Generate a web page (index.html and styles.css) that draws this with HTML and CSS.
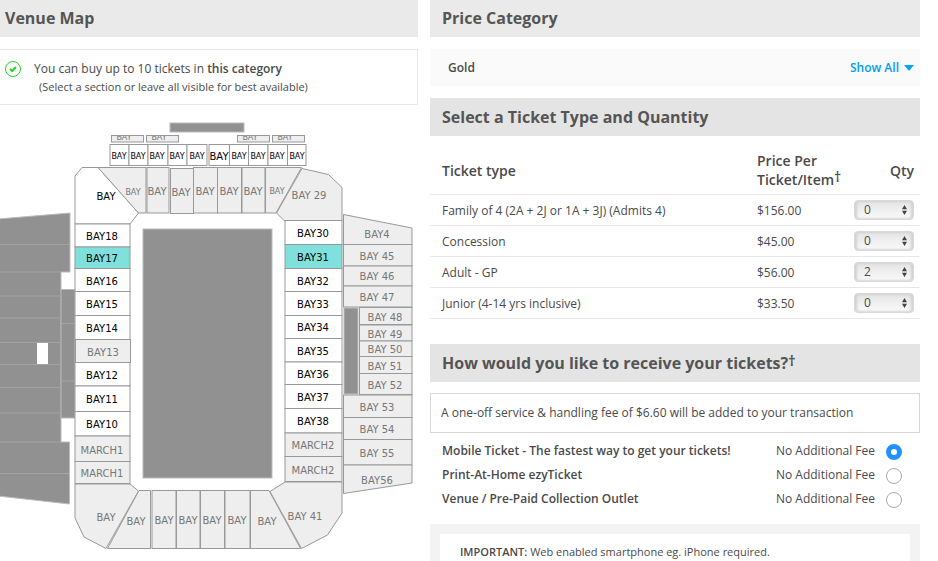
FILE: index.html
```html
<!DOCTYPE html>
<html lang="en">
<head>
    <meta charset="UTF-8">
    <meta name="viewport" content="width=device-width, initial-scale=1.0">
    <title>Select Tickets</title>
    <link rel="stylesheet" href="styles.css">
</head>
<body>
    <main class="page">
        <!-- Venue map -->
        <section class="venue">
            <h2 class="bar bar-venue">Venue Map</h2>

            <div class="notice">
                <svg class="tick" viewBox="0 0 18 18" aria-hidden="true">
                    <circle cx="9" cy="9" r="7.5"/>
                    <path d="M6 9l2 2 4-4"/>
                </svg>
                <div>
                    <p class="notice-main">You can buy up to 10 tickets in <strong>this category</strong></p>
                    <p class="notice-sub">(Select a section or leave all visible for best available)</p>
                </div>
            </div>

            <svg class="map" viewBox="0 105 418 456" role="img" aria-label="Stadium seating map">
                <defs>
                    <clipPath id="strip"><rect x="111" y="136" width="195" height="6"/></clipPath>
                </defs>

                <!-- Stands and field -->
                <g class="stand">
                    <rect x="170" y="123" width="74" height="9"/>
                    <rect x="143" y="229" width="129" height="249"/>
                    <path d="M-2 219L70 213V272H61V442H69.500V504L-2 496Z"/>
                    <rect x="61" y="289.500" width="14" height="128.500"/>
                    <rect x="344" y="308" width="14" height="86"/>
                </g>
                <path class="rows" d="M0 244.500H70M0 272H61M0 296H61M0 318H61M0 342.500H61M0 364.500H61M0 387.500H61M0 413H61M0 442H61M0 473.500H69M61 290V418M62 323.500H75M62 381H75"/>
                <rect class="gap" x="37" y="343" width="11" height="21"/>

                <!-- Open bays -->
                <g class="open">
                    <rect x="110" y="144.500" width="19" height="21"/>
                    <rect x="129" y="144.500" width="19" height="21"/>
                    <rect x="148" y="144.500" width="20" height="21"/>
                    <rect x="168" y="144.500" width="19" height="21"/>
                    <rect x="187" y="144.500" width="20" height="21"/>
                    <rect x="209" y="144.500" width="20.500" height="21"/>
                    <rect x="229.500" y="144.500" width="19" height="21"/>
                    <rect x="248.500" y="144.500" width="19.500" height="21"/>
                    <rect x="268" y="144.500" width="19.500" height="21"/>
                    <rect x="287.500" y="144.500" width="18.500" height="21"/>
                    <path d="M75 176L82 167.500H98L138.500 213L130 224H75Z"/>
                    <rect x="75" y="224" width="55" height="23"/>
                    <rect class="picked" x="75" y="247" width="55" height="21.500"/>
                    <rect x="75" y="268.500" width="55" height="23"/>
                    <rect x="75" y="291.500" width="55" height="24"/>
                    <rect x="75" y="315.500" width="55" height="24"/>
                    <rect x="75" y="362.500" width="55" height="23.500"/>
                    <rect x="75" y="386" width="55" height="25.500"/>
                    <rect x="75" y="411.500" width="55" height="24.500"/>
                    <rect x="285" y="220.500" width="57" height="24"/>
                    <rect class="picked" x="285" y="244.500" width="57" height="24"/>
                    <rect x="285" y="268.500" width="57" height="23"/>
                    <rect x="285" y="291.500" width="57" height="24"/>
                    <rect x="285" y="315.500" width="57" height="23"/>
                    <rect x="285" y="338.500" width="57" height="23.500"/>
                    <rect x="285" y="362" width="57" height="22.500"/>
                    <rect x="285" y="384.500" width="57" height="24"/>
                    <rect x="285" y="408.500" width="57" height="24.500"/>
                </g>

                <!-- Unavailable bays -->
                <g class="closed">
                    <rect x="111.500" y="135.500" width="32" height="6.500"/>
                    <rect x="146.500" y="135.500" width="32" height="6.500"/>
                    <rect x="237.500" y="135.500" width="32" height="6.500"/>
                    <rect x="272.500" y="135.500" width="32" height="6.500"/>
                    <path d="M98 167.500H146V213H138.500Z"/>
                    <rect x="147" y="167.500" width="22" height="45.500"/>
                    <rect x="170.500" y="168.500" width="23" height="45"/>
                    <rect x="193.500" y="167.500" width="24" height="45.500"/>
                    <rect x="217.500" y="167.500" width="24" height="45.500"/>
                    <rect x="242" y="167.500" width="23" height="45.500"/>
                    <path d="M265.500 167.500H301.500L276 213H265.500Z"/>
                    <path d="M302 168.500L328.500 174.500L342 187.500V220.500H284L276.500 213Z"/>
                    <rect x="75.500" y="339.500" width="55" height="23"/>
                    <rect x="75" y="436" width="55" height="25.500"/>
                    <rect x="75" y="461.500" width="55" height="22"/>
                    <path d="M75 484H130L138.500 491L106 548.500L84 537L75 518Z"/>
                    <path d="M139 490.500H150.500V548.500H107.500Z"/>
                    <rect x="152" y="490.500" width="24" height="58"/>
                    <rect x="176.500" y="490.500" width="23.500" height="58"/>
                    <rect x="200.500" y="490.500" width="24" height="58"/>
                    <rect x="225" y="490.500" width="25" height="58"/>
                    <path d="M250.500 490.500H269L300.500 548.500H250.500Z"/>
                    <path d="M270 491.500L285 482H342V513L327.500 535L301.500 548.500Z"/>
                    <rect x="285" y="433" width="57" height="23.500"/>
                    <rect x="285" y="456.500" width="57" height="25"/>
                    <path d="M343.500 214.500L412 228V244.500H343.500Z"/>
                    <rect x="343.500" y="244.500" width="68.500" height="21.500"/>
                    <rect x="343.500" y="266" width="68.500" height="20"/>
                    <rect x="343.500" y="286" width="68.500" height="21"/>
                    <rect x="359.500" y="307.500" width="52.500" height="17"/>
                    <rect x="359.500" y="325" width="52.500" height="16"/>
                    <rect x="359.500" y="341" width="52.500" height="15.500"/>
                    <rect x="359.500" y="356.500" width="52.500" height="17"/>
                    <rect x="359.500" y="373.500" width="52.500" height="21"/>
                    <rect x="343.500" y="395" width="68.500" height="22.500"/>
                    <rect x="343.500" y="417.500" width="68.500" height="22"/>
                    <rect x="343.500" y="439.500" width="68.500" height="25.500"/>
                    <path d="M343.500 465H412V483L343.500 493.500Z"/>
                </g>

                <!-- Labels -->
                <g class="label label-closed label-small" clip-path="url(#strip)">
                    <text x="124" y="140">BAY</text>
                    <text x="159" y="140">BAY</text>
                    <text x="250" y="140">BAY</text>
                    <text x="285" y="140">BAY</text>
                </g>
                <g class="label label-small">
                    <text x="119" y="159">BAY</text>
                    <text x="138" y="159">BAY</text>
                    <text x="157" y="159">BAY</text>
                    <text x="177" y="159">BAY</text>
                    <text x="197" y="159">BAY</text>
                    <text x="239" y="159">BAY</text>
                    <text x="258" y="159">BAY</text>
                    <text x="277" y="159">BAY</text>
                    <text x="297" y="159">BAY</text>
                </g>
                <g class="label">
                    <text x="219" y="160">BAY</text>
                    <text x="106" y="200">BAY</text>
                    <text x="102" y="240">BAY18</text>
                    <text x="102" y="262">BAY17</text>
                    <text x="102" y="285">BAY16</text>
                    <text x="102" y="308">BAY15</text>
                    <text x="102" y="332">BAY14</text>
                    <text x="102" y="379">BAY12</text>
                    <text x="102" y="403">BAY11</text>
                    <text x="102" y="428">BAY10</text>
                    <text x="313" y="237">BAY30</text>
                    <text x="313" y="261">BAY31</text>
                    <text x="313" y="285">BAY32</text>
                    <text x="313" y="308">BAY33</text>
                    <text x="313" y="331">BAY34</text>
                    <text x="313" y="355">BAY35</text>
                    <text x="313" y="378">BAY36</text>
                    <text x="313" y="401">BAY37</text>
                    <text x="313" y="425">BAY38</text>
                </g>
                <g class="label label-closed label-small">
                    <text x="133" y="195">BAY</text>
                    <text x="277" y="194">BAY</text>
                </g>
                <g class="label label-closed">
                    <text x="157" y="195">BAY</text>
                    <text x="181" y="196">BAY</text>
                    <text x="205" y="195">BAY</text>
                    <text x="229" y="195">BAY</text>
                    <text x="253" y="195">BAY</text>
                    <text x="309" y="199">BAY 29</text>
                    <text x="103" y="356">BAY13</text>
                    <text x="102" y="454">MARCH1</text>
                    <text x="102" y="477">MARCH1</text>
                    <text x="106" y="521">BAY</text>
                    <text x="136" y="525">BAY</text>
                    <text x="164" y="524">BAY</text>
                    <text x="188" y="524">BAY</text>
                    <text x="212" y="524">BAY</text>
                    <text x="237" y="524">BAY</text>
                    <text x="267" y="525">BAY</text>
                    <text x="305" y="520">BAY 41</text>
                    <text x="313" y="449">MARCH2</text>
                    <text x="313" y="474">MARCH2</text>
                    <text x="377" y="238">BAY4</text>
                    <text x="377" y="260">BAY 45</text>
                    <text x="377" y="280">BAY 46</text>
                    <text x="377" y="301">BAY 47</text>
                    <text x="385" y="321">BAY 48</text>
                    <text x="385" y="338">BAY 49</text>
                    <text x="385" y="353">BAY 50</text>
                    <text x="385" y="370">BAY 51</text>
                    <text x="385" y="389">BAY 52</text>
                    <text x="377" y="411">BAY 53</text>
                    <text x="377" y="433">BAY 54</text>
                    <text x="377" y="457">BAY 55</text>
                    <text x="377" y="484">BAY56</text>
                </g>
            </svg>
        </section>

        <!-- Ticket options -->
        <section class="options">
            <h2 class="bar">Price Category</h2>

            <div class="category">
                <span>Gold</span>
                <a class="show-all" href="#">Show All
                    <svg class="caret" viewBox="0 0 10 6" aria-hidden="true"><path d="M0 0h10L5 6z"/></svg>
                </a>
            </div>

            <h2 class="bar bar-dark">Select a Ticket Type and Quantity</h2>

            <table class="tickets">
                <thead>
                    <tr>
                        <th class="col-type">Ticket type</th>
                        <th class="col-price">Price Per Ticket/Item<sup>†</sup></th>
                        <th class="col-qty">Qty</th>
                    </tr>
                </thead>
                <tbody>
                    <tr>
                        <td><label for="qty-family">Family of 4 (2A + 2J or 1A + 3J) (Admits 4)</label></td>
                        <td>$156.00</td>
                        <td class="col-qty">
                            <span class="qty">
                                <select id="qty-family"><option>0</option><option>1</option><option>2</option></select>
                                <svg viewBox="0 0 6 12" aria-hidden="true"><path d="M0 5h6L3 0zM0 7h6L3 12z"/></svg>
                            </span>
                        </td>
                    </tr>
                    <tr>
                        <td><label for="qty-concession">Concession</label></td>
                        <td>$45.00</td>
                        <td class="col-qty">
                            <span class="qty">
                                <select id="qty-concession"><option>0</option><option>1</option><option>2</option></select>
                                <svg viewBox="0 0 6 12" aria-hidden="true"><path d="M0 5h6L3 0zM0 7h6L3 12z"/></svg>
                            </span>
                        </td>
                    </tr>
                    <tr>
                        <td><label for="qty-adult">Adult - GP</label></td>
                        <td>$56.00</td>
                        <td class="col-qty">
                            <span class="qty">
                                <select id="qty-adult"><option>0</option><option>1</option><option selected>2</option></select>
                                <svg viewBox="0 0 6 12" aria-hidden="true"><path d="M0 5h6L3 0zM0 7h6L3 12z"/></svg>
                            </span>
                        </td>
                    </tr>
                    <tr>
                        <td><label for="qty-junior">Junior (4-14 yrs inclusive)</label></td>
                        <td>$33.50</td>
                        <td class="col-qty">
                            <span class="qty">
                                <select id="qty-junior"><option>0</option><option>1</option><option>2</option></select>
                                <svg viewBox="0 0 6 12" aria-hidden="true"><path d="M0 5h6L3 0zM0 7h6L3 12z"/></svg>
                            </span>
                        </td>
                    </tr>
                </tbody>
            </table>

            <h2 class="bar bar-dark">How would you like to receive your tickets?<sup>†</sup></h2>

            <p class="fee-note">A one-off service &amp; handling fee of $6.60 will be added to your transaction</p>

            <div class="delivery">
                <label class="method">
                    <strong>Mobile Ticket - The fastest way to get your tickets!</strong>
                    <span>No Additional Fee</span>
                    <input type="radio" name="delivery" checked>
                </label>
                <label class="method">
                    <strong>Print-At-Home ezyTicket</strong>
                    <span>No Additional Fee</span>
                    <input type="radio" name="delivery">
                </label>
                <label class="method">
                    <strong>Venue / Pre-Paid Collection Outlet</strong>
                    <span>No Additional Fee</span>
                    <input type="radio" name="delivery">
                </label>
            </div>

            <div class="important">
                <p><strong>IMPORTANT:</strong> Web enabled smartphone eg. iPhone required.</p>
            </div>
        </section>
    </main>
</body>
</html>
```
FILE: styles.css
```css
/* General settings */
* {
    box-sizing: border-box;
}

body {
    margin: 0;
    background-color: #fff;
    color: #4a4a4a;
    font-family: "Open Sans", Arial, sans-serif;
    font-size: 12px;
    line-height: 18px;
    overflow-x: hidden;
}

p {
    margin: 0;
}

strong {
    font-weight: 600;
}

sup {
    font-size: 14px;
    line-height: 0;
    vertical-align: 3px;
}

.page {
    display: grid;
    grid-template-columns: 418fr 490fr;
    column-gap: 12px;
    padding-right: 18px;
}

/* Grey heading bars */
.bar {
    margin: 0;
    padding: 6px 12px 7px;
    background-color: #eaeaea;
    color: #555;
    font-size: 16px;
    font-weight: 700;
    line-height: 24px;
}

.bar-venue {
    padding-left: 5px;
}

.bar-dark {
    padding-top: 7px;
    background-color: #e4e4e4;
}

/* Ticket limit notice */
.notice {
    display: flex;
    gap: 12px;
    margin-top: 12px;
    padding: 10px 4px 9px;
    border: 1px solid #e8e8e8;
    border-left: 0;
}

.tick {
    flex: none;
    width: 18px;
    height: 18px;
    fill: none;
    stroke: #22d622;
}

.tick path {
    stroke-width: 2;
}

.notice-sub {
    padding-left: 5px;
    font-size: 11px;
    line-height: 17px;
}

/* Seating map */
.map {
    display: block;
    width: 100%;
}

.stand {
    fill: #919191;
    stroke: #bbb;
}

.rows {
    fill: none;
    stroke: #a3a3a3;
}

.gap {
    fill: #fff;
}

.open {
    fill: #fff;
    stroke: #999;
}

.open .picked {
    fill: #80e0dc;
}

.closed {
    fill: #eee;
    stroke: #999;
}

.label {
    fill: #000;
    font-family: "DejaVu Sans", Verdana, sans-serif;
    font-size: 10px;
    text-anchor: middle;
}

.label-small {
    font-size: 8px;
}

.label-closed {
    fill: #777;
}

/* Price category */
.category {
    display: flex;
    justify-content: space-between;
    margin: 12px 0;
    padding: 10px 6px 9px 18px;
    background-color: #fafafa;
    font-weight: 600;
}

.show-all {
    display: flex;
    align-items: center;
    gap: 5px;
    color: #009fec;
    text-decoration: none;
}

.caret {
    width: 10px;
    height: 6px;
    fill: #00a8f3;
}

/* Ticket table */
.tickets {
    width: 100%;
    margin-bottom: 25px;
    border-collapse: collapse;
    table-layout: fixed;
}

.tickets th,
.tickets td {
    height: 31px;
    padding: 2px 0 0 12px;
    border-bottom: 1px solid #e8e8e8;
    text-align: left;
}

.tickets th {
    height: 58px;
    padding-top: 11px;
    font-size: 14px;
    font-weight: 600;
    line-height: 19px;
}

.tickets .col-type {
    width: 315px;
}

.tickets .col-price {
    width: 98px;
}

.tickets .col-qty {
    padding-left: 0;
    padding-right: 6px;
    text-align: right;
}

.tickets td.col-qty {
    padding-top: 0;
}

.qty {
    display: inline-block;
    position: relative;
    vertical-align: middle;
}

.qty select {
    display: block;
    width: 60px;
    height: 20px;
    padding: 0 9px;
    appearance: none;
    border: 1px solid #d8d8d8;
    border-radius: 4px;
    background: linear-gradient(#e4e4e4, #fafafa);
    box-shadow: inset 2px 0 3px #d0d0d0, inset -2px 0 3px #d0d0d0;
    color: #4a4a4a;
    font-family: inherit;
    font-size: 12px;
}

.qty svg {
    position: absolute;
    top: 5px;
    right: 7px;
    width: 5px;
    height: 10px;
    fill: #444;
    pointer-events: none;
}

/* Delivery methods */
.fee-note {
    margin-top: 11px;
    padding: 10px;
    border: 1px solid #d8d8d8;
}

.delivery {
    padding: 6px 18px 13px 12px;
}

.method {
    display: flex;
    align-items: center;
    height: 24px;
}

.method strong {
    flex: 1;
}

.method input {
    width: 16px;
    height: 16px;
    margin: 3px 0 0 11px;
    appearance: none;
    border: 1px solid #aaa;
    border-radius: 50%;
    background-color: #fff;
}

.method input:checked {
    border: 5px solid #2390ff;
}

/* Bottom message */
.important {
    padding: 10px;
    background-color: #f3f3f3;
}

.important p {
    padding: 9px 20px;
    background-color: #fff;
    font-size: 11px;
}
```
